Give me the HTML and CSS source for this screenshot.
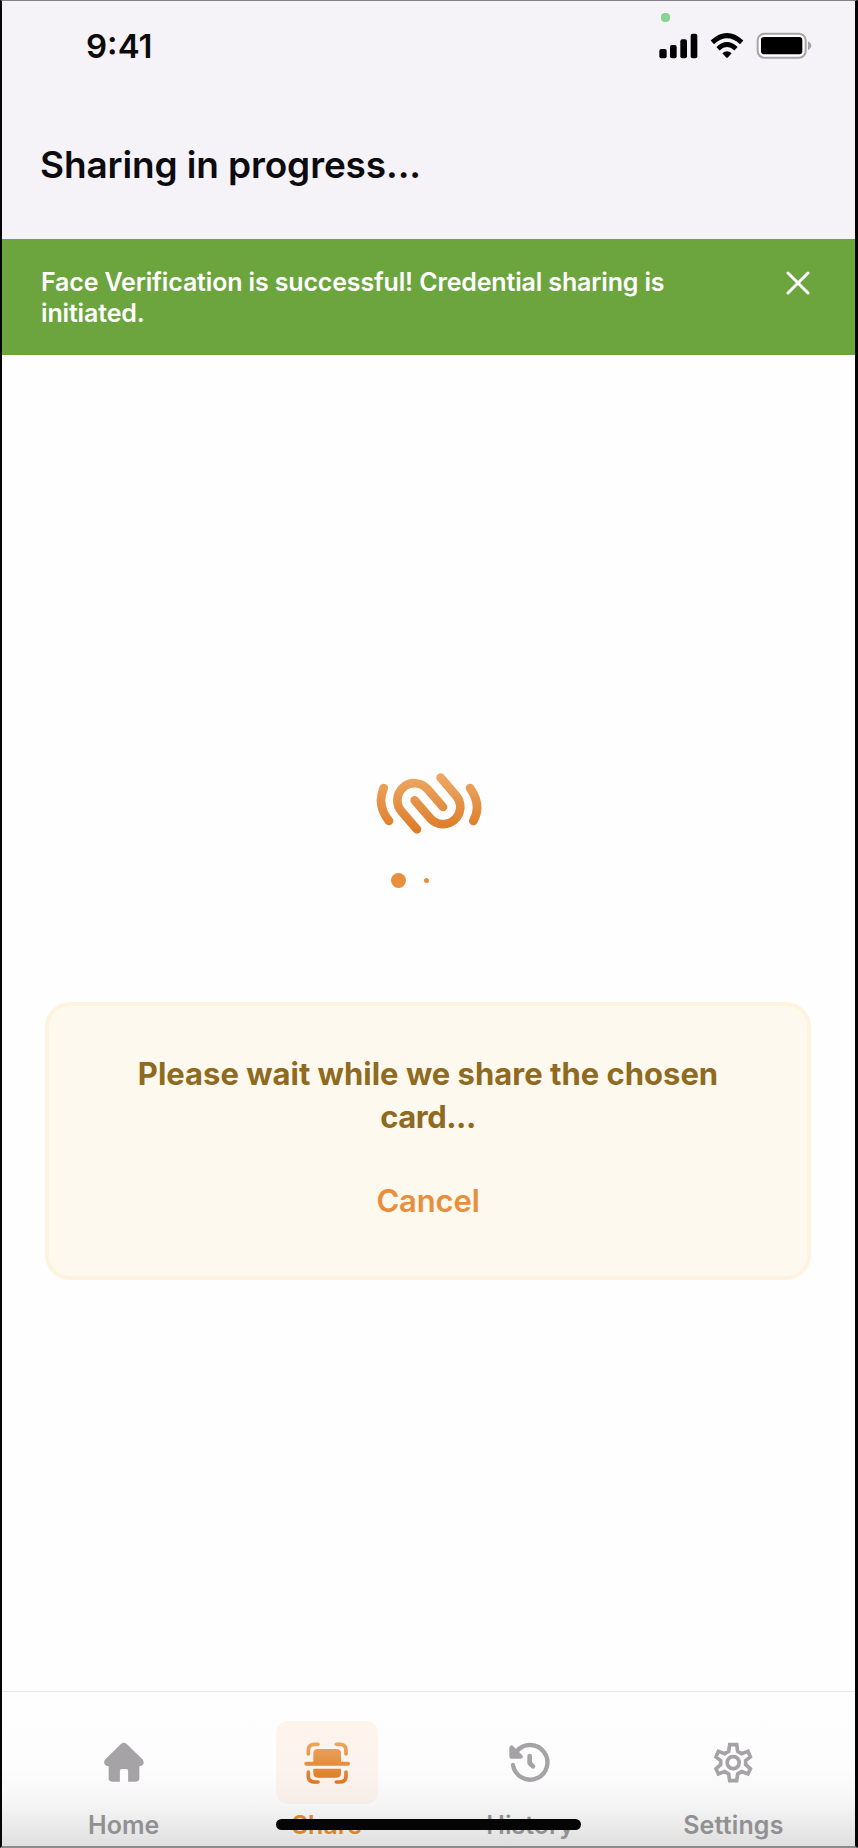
FILE: index.html
```html
<!DOCTYPE html>
<html lang="en">
<head>
<meta charset="utf-8">
<title>Sharing in progress</title>
<link rel="stylesheet" href="styles.css">
</head>
<body>
<div class="screen">
  <header class="header">
    <div class="status">
      <span class="time">9:41</span>
      <span class="camera-dot"></span>
      <svg class="signal" viewBox="56 98 117 78" width="39" height="26">
        <rect x="57" y="146" width="22" height="28" rx="6"/>
        <rect x="89" y="134" width="20" height="40" rx="6"/>
        <rect x="120" y="117" width="20" height="57" rx="6"/>
        <rect x="151" y="100" width="20" height="74" rx="6"/>
      </svg>
      <svg class="wifi" viewBox="210 98 102 78" width="34" height="26">
        <path d="M217 126Q261 86 305 126" fill="none" stroke="#000" stroke-width="15"/>
        <path d="M234 145Q261 120 288 145" fill="none" stroke="#000" stroke-width="14"/>
        <path d="M247 159Q261 146 275 159L264 171Q261 174 258 171Z"/>
      </svg>
      <svg class="battery" viewBox="348 96 168 81" width="56" height="27">
        <rect x="353" y="101" width="144" height="72" rx="20" fill="#fff" stroke="#a5a4a7" stroke-width="6"/>
        <rect x="363" y="111" width="124" height="52" rx="9"/>
        <path d="M504 124Q514 129 514 137T504 151Z" fill="#a5a4a7"/>
      </svg>
    </div>
    <h1 class="title">Sharing in progress...</h1>
  </header>

  <div class="banner">
    <p class="banner-text">Face Verification is successful! Credential sharing is initiated.</p>
    <svg class="close" viewBox="0 0 24 24" width="24" height="24">
      <path d="M2 2L22 22M22 2L2 22" fill="none" stroke="#fff" stroke-width="3" stroke-linecap="round"/>
    </svg>
  </div>

  <main class="main">
    <svg class="logo" viewBox="45 65 324 190" width="108" height="63.3">
      <defs>
        <linearGradient id="logoFill" gradientUnits="userSpaceOnUse" x1="0" y1="70" x2="0" y2="250">
          <stop offset="0" stop-color="#eda966"/>
          <stop offset="1" stop-color="#dc7a25"/>
        </linearGradient>
      </defs>
      <g fill="none" stroke="url(#logoFill)" stroke-width="26" stroke-linecap="round">
        <path d="M71 113Q49 165 87 212"/>
        <path d="M330 113Q367 165 340 212"/>
        <path d="M171 237L125 184A51 51 0 0 1 202 116L249 170"/>
        <path d="M242 82L288 136A51 51 0 0 1 211 204L164 150"/>
      </g>
    </svg>
    <div class="dots"><span class="dot dot-large"></span><span class="dot dot-small"></span></div>
    <section class="card">
      <p class="card-text">Please wait while we share the chosen <span class="last-word">card...</span></p>
      <button class="cancel">Cancel</button>
    </section>
  </main>

  <nav class="nav">
    <a class="tab">
      <span class="tab-icon">
        <svg class="home-icon" viewBox="311 186 121 121" width="40" height="40">
          <path fill="#a5a3a6" d="M363 191Q371 185 379 191L428 239Q436 253 424 258L418 259V296Q418 306 407 306H384V274Q384 268 378 268H365Q359 268 359 274V306H335Q325 306 325 296V259L318 258Q307 251 314 240Z"/>
        </svg>
      </span>
      <span class="label">Home</span>
    </a>
    <a class="tab tab-active">
      <span class="tab-icon">
        <svg viewBox="133 124 138 126" width="46" height="42">
          <defs>
            <linearGradient id="scanFill" gradientUnits="userSpaceOnUse" x1="0" y1="125" x2="0" y2="250">
              <stop offset="0" stop-color="#eba762"/>
              <stop offset="1" stop-color="#db7722"/>
            </linearGradient>
          </defs>
          <g fill="none" stroke="url(#scanFill)" stroke-width="11" stroke-linecap="round">
            <path d="M146 160V149Q146 131 164 131H175"/>
            <path d="M230 131H241Q259 131 259 149V160"/>
            <path d="M146 214V225Q146 244 164 244H175"/>
            <path d="M230 244H241Q259 244 259 225V214"/>
          </g>
          <g fill="url(#scanFill)">
            <path d="M161 185V158Q161 145 174 145H231Q244 145 244 158V185Z"/>
            <rect x="134" y="183" width="137" height="12" rx="6"/>
            <path d="M161 204H244V217Q244 231 231 231H174Q161 231 161 217Z"/>
          </g>
        </svg>
      </span>
      <span class="label label-share">Share</span>
    </a>
    <a class="tab">
      <span class="tab-icon">
        <svg viewBox="148 124 124 124" width="41.3" height="41.3">
          <path d="M160 193A52 52 0 1 0 172 151" fill="none" stroke="#a5a3a6" stroke-width="13" stroke-linecap="round"/>
          <path d="M149 139Q154 130 161 137L188 164Q193 172 184 174H155Q149 174 149 168Z" fill="#a5a3a6"/>
          <path d="M210 166V187L220 197" fill="none" stroke="#a5a3a6" stroke-width="14" stroke-linecap="round" stroke-linejoin="round"/>
        </svg>
      </span>
      <span class="label">History</span>
    </a>
    <a class="tab">
      <span class="tab-icon">
        <svg viewBox="220 124 120 124" width="40" height="41.3">
          <g fill="none" stroke="#a5a3a6" stroke-width="11">
            <path d="M270 132H291L294 152L306 159L325 152L332 169L318 180V192L332 204L325 220L306 213L294 220L291 240H270L267 220L255 213L236 220L229 204L243 192V180L229 169L236 152L255 159L267 152Z"/>
            <circle cx="280.500" cy="186" r="18"/>
          </g>
        </svg>
      </span>
      <span class="label label-settings">Settings</span>
    </a>
    <span class="home-indicator"></span>
  </nav>
</div>
</body>
</html>
```
FILE: styles.css
```css
* { box-sizing: border-box; }
body { margin: 0; font-family: Inter, "Liberation Sans", sans-serif; }
.screen {
  width: 858px;
  height: 1848px;
  display: flex;
  flex-direction: column;
  overflow: hidden;
  background: #fefefe;
  border-style: solid;
  border-width: 1px 3px 2px 2px;
  border-color: #858287 #050505 #8c8c8c #050505;
}
.header { flex: none; height: 238px; background: #f5f3f7; }
.status { position: relative; display: flex; height: 90px; padding: 31px 0 0 84px; }
.time { width: 573px; margin-top: -1px; font-size: 33px; line-height: 30px; font-weight: 600; color: #0b0b0c; }
.camera-dot { position: absolute; left: 659px; top: 12px; width: 9px; height: 9px; border-radius: 4px; background: #86d492; }
.signal { margin-top: 1px; }
.wifi { margin: 1px 0 0 12px; }
.battery { margin-left: 12px; }
.title { margin: 52px 0 0 38px; font-size: 37px; line-height: 44px; font-weight: 600; letter-spacing: -0.130px; color: #0c0c0e; white-space: nowrap; }
.banner { flex: none; height: 115.500px; display: flex; justify-content: space-between; padding: 28px 45px 0 39px; background: #6ca43e; }
.banner-text { margin: 0; width: 660px; font-size: 25px; line-height: 31px; font-weight: 600; letter-spacing: -0.150px; color: #fff; }
.close { margin-top: 4px; }
.main { flex: 1; display: flex; flex-direction: column; align-items: center; padding-top: 417.500px; }
.logo { flex: none; }
.dots { display: flex; align-items: center; width: 72px; height: 16px; margin: 37.700px 4px 0 0; }
.dot { border-radius: 50%; background: #e78f3d; }
.dot-large { width: 15px; height: 15px; }
.dot-small { width: 5px; height: 5px; margin-left: 18.500px; }
.card {
  width: 766px;
  height: 278px;
  margin: 113px 1px 0 0;
  padding: 46px 70px 0;
  display: flex;
  flex-direction: column;
  align-items: center;
  border: 4px solid #fef3df;
  border-radius: 25px;
  background: #fef9ee;
}
.card-text { margin: 0; width: 610px; font-size: 31px; line-height: 43.500px; font-weight: 700; text-align: center; color: #8f6a21; }
.last-word { letter-spacing: -0.500px; }
.cancel { margin: 40px 0 0; padding: 0; border: 0; background: none; font: 600 31px/44px Inter, "Liberation Sans", sans-serif; letter-spacing: -0.150px; color: #e78f3d; }
.nav {
  position: relative;
  flex: none;
  display: flex;
  height: 155px;
  padding: 29px 20px 0;
  border-top: 1px solid #e6e6e6;
  background: linear-gradient(#fefefe 0, #fdfdfd 50%, #f6f6f6 72%, #dfdfdf 100%);
}
.tab { flex: 1; display: flex; flex-direction: column; align-items: center; }
.tab-icon { display: flex; align-items: center; justify-content: center; width: 102px; height: 83px; border-radius: 12px; }
.home-icon { margin-bottom: 1px; }
.tab-active .tab-icon { background: linear-gradient(#fef4ec, #fdf3ee 60%, #f6ede8); }
.label { margin-top: 6px; font-size: 25px; line-height: 30px; font-weight: 600; color: #919093; }
.label-share { color: #d9862e; }
.label-settings { letter-spacing: 0.150px; }
.home-indicator { position: absolute; left: 274px; top: 127px; width: 305px; height: 10.500px; border-radius: 6px; background: #050505; }
```
